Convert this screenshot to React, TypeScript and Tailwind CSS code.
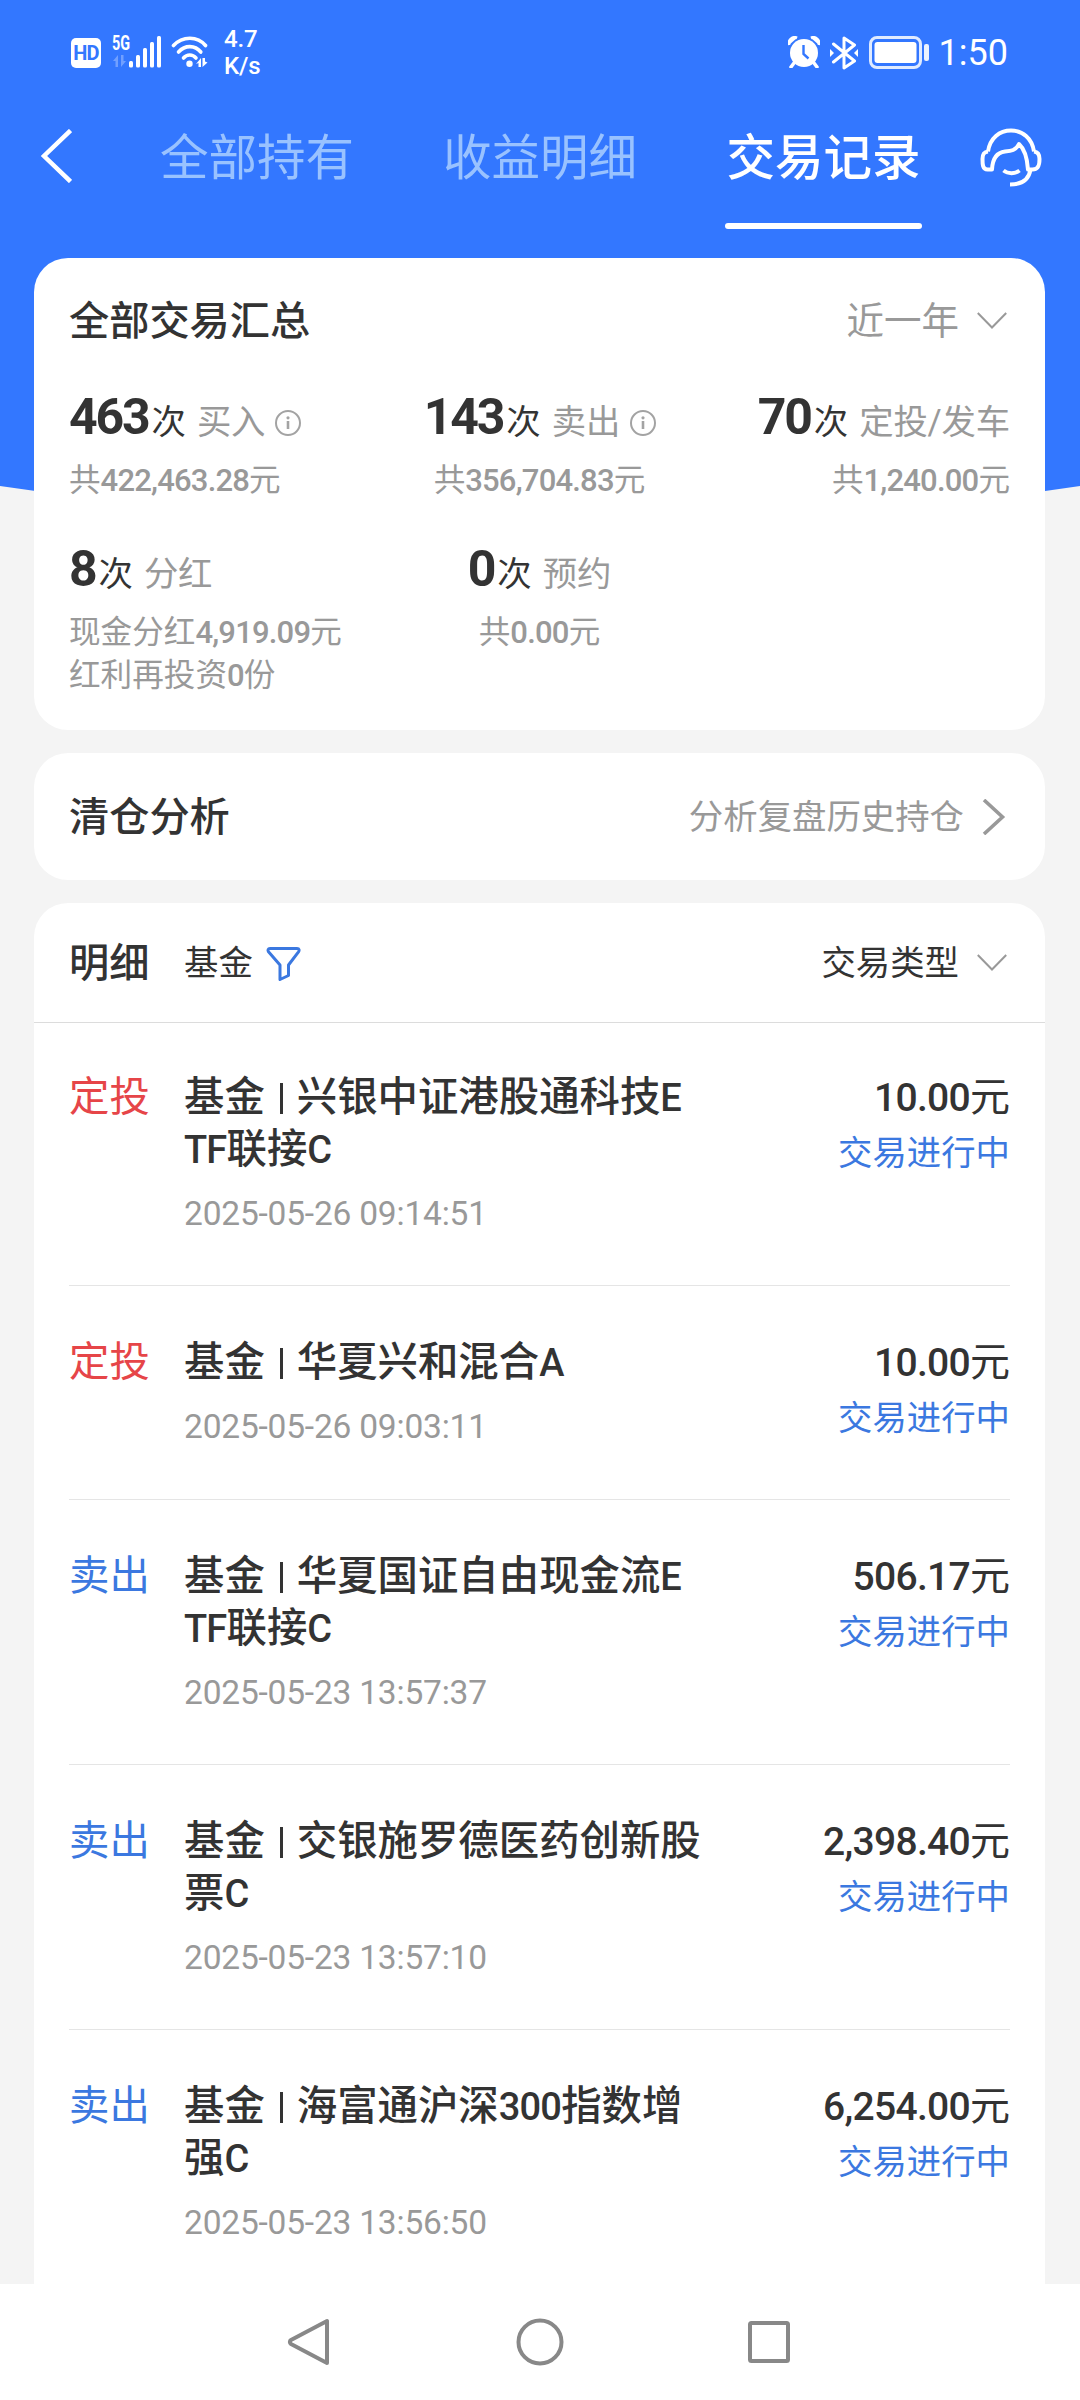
import React from 'react';

interface Summary {
  count: string;
  label: string;
  info?: boolean;
  details: string[];
  align: string;
}

interface Trade {
  type: '定投' | '卖出';
  name: string[];
  time: string;
  amount: string;
}

const summaries: Summary[] = [
  { count: '463', label: '买入', info: true, details: ['共422,463.28元'], align: 'items-start' },
  { count: '143', label: '卖出', info: true, details: ['共356,704.83元'], align: 'items-center' },
  { count: '70', label: '定投/发车', details: ['共1,240.00元'], align: 'items-end' },
  { count: '8', label: '分红', details: ['现金分红4,919.09元', '红利再投资0份'], align: 'items-start' },
  { count: '0', label: '预约', details: ['共0.00元'], align: 'items-center' },
];

const trades: Trade[] = [
  { type: '定投', name: ['兴银中证港股通科技E', 'TF联接C'], time: '2025-05-26 09:14:51', amount: '10.00' },
  { type: '定投', name: ['华夏兴和混合A'], time: '2025-05-26 09:03:11', amount: '10.00' },
  { type: '卖出', name: ['华夏国证自由现金流E', 'TF联接C'], time: '2025-05-23 13:57:37', amount: '506.17' },
  { type: '卖出', name: ['交银施罗德医药创新股', '票C'], time: '2025-05-23 13:57:10', amount: '2,398.40' },
  { type: '卖出', name: ['海富通沪深300指数增', '强C'], time: '2025-05-23 13:56:50', amount: '6,254.00' },
];

// Latin letters and digits run narrower than the Chinese glyphs beside them
const Mixed: React.FC<{ text: string; latin: string }> = ({ text, latin }) => (
  <>
    {text.split(/([A-Za-z0-9.,]+)/).map((part, i) =>
      i % 2 ? <span key={i} className={latin}>{part}</span> : part
    )}
  </>
);

const ChevronDown: React.FC = () => (
  <svg className="mr-[3px] h-[18px] w-[30px]" viewBox="0 0 30 18" fill="none" stroke="#999" strokeWidth="2">
    <path d="M.8 1L15 15.500 29.200 1" />
  </svg>
);

const InfoIcon: React.FC = () => (
  <svg className="h-[26px] w-[26px]" viewBox="0 0 26 26" fill="none" stroke="#a3a3a3" strokeWidth="2">
    <circle cx="13" cy="13" r="12" />
    <path d="M13 11v8" strokeWidth="2.6" />
    <circle cx="13" cy="7.8" r="1.6" fill="#a3a3a3" stroke="none" />
  </svg>
);

const StatusBar: React.FC = () => (
  <div className="flex h-[104px] items-start pl-[71px] pr-[72px] text-white">
    <div className="mt-[38px] flex h-[30px] w-[30px] items-center justify-center rounded-[5px] bg-white text-[20px] font-bold leading-none tracking-[-0.8px] text-[#3377ff]">
      HD
    </div>
    <div className="ml-[11px] mt-[34px] flex h-[36px] w-[19px] flex-col">
      <span className="origin-left scale-x-[0.72] text-[20px] font-bold leading-[19px]">5G</span>
      <svg className="mt-px h-[14px] w-[16px] opacity-30" viewBox="0 0 16 14" fill="#fff">
        <path d="M1 7l5-6v12H3.500V7zM9 1v12l5-6h-2.500V1z" />
      </svg>
    </div>
    <svg className="-ml-[2px] mt-[36px] h-8 w-[33px]" viewBox="0 0 33 32" fill="#fff">
      <rect x="0" y="25" width="4" height="6.500" rx="1.500" />
      <rect x="7" y="19" width="4" height="12.500" rx="1.500" />
      <rect x="14" y="12" width="4" height="19.500" rx="1.500" />
      <rect x="21" y="6" width="4" height="25.500" rx="1.500" />
      <rect x="28" y="0" width="4" height="31.500" rx="1.500" />
    </svg>
    <svg className="ml-[9px] mt-[35px] h-[34px] w-[38px]" viewBox="0 0 38 34" fill="none" stroke="#fff" strokeWidth="3.600" strokeLinecap="round">
      <path d="M2.500 10.500C11.500 .8 26.500 .8 34.500 10.500" />
      <path d="M7.500 17C14 9.800 24 9.800 29.800 17" />
      <path d="M12.500 23C16 19 21.500 19 25 23" />
      <circle cx="18.500" cy="28.800" r="3.200" fill="#fff" stroke="none" />
      <path d="M25 29l5-6v9h-2.500v-4zM31.500 23v9l5-4.500-2.500-1v-3.500z" fill="#fff" stroke="none" />
    </svg>
    <div className="ml-[15px] mt-[26px] text-[24px] font-medium leading-[27px] tracking-[-0.2px]">
      <div>4.7</div>
      <div>K/s</div>
    </div>
    <div className="ml-auto flex items-start">
      <svg className="mt-[36px] h-8 w-8" viewBox="0 0 32 32" fill="#fff">
        <path d="M6 27l-3 4M26 27l3 4" stroke="#fff" strokeWidth="3.500" strokeLinecap="round" />
        <circle cx="16" cy="17" r="14" />
        <path d="M1 9C0 4 5 0 9 2M31 9c1-5-4-9-8-7" stroke="#fff" strokeWidth="3" />
        <path d="M15.500 9v9l5 4.500" fill="none" stroke="#3377ff" strokeWidth="2.400" />
      </svg>
      <svg className="ml-[10px] mt-[36px] h-[34px] w-[28px]" viewBox="0 0 28 34" fill="none" stroke="#fff" strokeWidth="3">
        <path d="M3.500 8l21 17L14 32V2l10.500 7-21 17" strokeLinejoin="round" strokeLinecap="round" />
        <path d="M0 13l4 4-4 4zM28 13l-4 4 4 4z" fill="#fff" stroke="none" />
      </svg>
      <svg className="ml-[11px] mt-[36px] h-[33px] w-[60px]" viewBox="0 0 60 33" fill="none">
        <rect x="1.500" y="1.500" width="50" height="30" rx="6.500" stroke="#fff" strokeOpacity=".85" strokeWidth="3" />
        <rect x="5.500" y="6" width="42" height="21" rx="3" fill="#fff" />
        <rect x="55" y="8" width="5" height="17" rx="2" fill="#fff" fillOpacity=".9" />
      </svg>
      <div className="ml-[10px] mt-[33px] text-[36px] leading-[40px]">1:50</div>
    </div>
  </div>
);

const TabBar: React.FC = () => (
  <div className="flex h-[126px] items-start pl-[40px] pr-[38px] text-[48.500px] leading-[56px] text-white">
    <svg className="mt-[25px] h-[54px] w-8" viewBox="0 0 32 54" fill="none" stroke="#fff" strokeWidth="4.500">
      <path d="M30.500 1.500L4 27l26.500 25.500" />
    </svg>
    <div className="ml-[88px] mt-[27px] text-[#99c2ff]">全部持有</div>
    <div className="ml-[89px] mt-[27px] text-[#99c2ff]">收益明细</div>
    <div className="ml-[88px] mt-[27px] flex w-[197px] flex-col items-center font-medium">
      交易记录
      <div className="mt-[36px] h-[6px] w-full rounded-full bg-white" />
    </div>
    <svg className="ml-auto mt-[23px] h-[60px] w-[62px]" viewBox="0 0 62 60" fill="none" stroke="#fff" strokeWidth="4" strokeLinejoin="round">
      <path d="M8 24.500C10 11 19.500 3.500 31 3.500S52 11 54 24.500" />
      <path d="M8 24.500C4 25 2.500 27 2.500 32s0 10.500 5 10.500h4.500C12.500 32 17 25.500 25 24.500c6-.5 11-1 14-7.500 5 4.500 8 11 9 25.500h4.500c7 0 7-6.500 7-10.500S58 25 54 24.500" />
      <path d="M23.500 43.500c4.500 3.500 11.500 3.500 16 0" />
      <path d="M50.500 42.500C49 52 42 57.500 30 57.500" />
    </svg>
  </div>
);

const SummaryCell: React.FC<{ item: Summary }> = ({ item }) => (
  <div className={`flex flex-col ${item.align}`}>
    <div className="flex h-[58px] items-start whitespace-nowrap text-[34.400px] leading-[50px]">
      <span className="mt-px text-[50px] font-bold leading-[50px] tracking-[-2.200px] text-[#333]">{item.count}</span>
      <span className="ml-[3px] mt-[6px] text-[#333]">次</span>
      <span className="ml-[11px] mt-[6px] tracking-[-0.200px] text-[#999]">{item.label}</span>
      {item.info && <span className="-mr-px ml-[10px] mt-[19px]"><InfoIcon /></span>}
    </div>
    <div className="mt-[10px] text-[31.600px] leading-[43px] text-[#999]">
      {item.details.map((line) => (
        <div key={line}>
          <Mixed text={line} latin="text-[31px] font-medium tracking-[-0.800px]" />
        </div>
      ))}
    </div>
  </div>
);

const TradeRow: React.FC<{ trade: Trade }> = ({ trade }) => (
  <div className="mx-[35px] flex items-start border-b border-[#e5e5e5] pb-[49.300px] pt-[51px] last:border-b-0">
    <div className={`w-[115px] text-[40.400px] leading-[52px] ${trade.type === '定投' ? 'text-[#e64548]' : 'text-[#3b78e0]'}`}>
      {trade.type}
    </div>
    <div className="flex-1">
      <div className="whitespace-nowrap text-[40.400px] font-medium leading-[52px] text-[#333]">
        {trade.name.map((line, i) => (
          <div key={line}>
            {i === 0 && <>基金<span className="mx-[14.500px] inline-block h-[31px] w-[3px] translate-x-px translate-y-[3px] bg-[#333]" /></>}
            <Mixed text={line} latin="text-[38px] tracking-[-0.800px]" />
          </div>
        ))}
      </div>
      <div className="mt-[16px] text-[33.500px] leading-[44px] tracking-[-0.200px] text-[#999]">{trade.time}</div>
    </div>
    <div className="text-right">
      <div className="text-[40px] font-medium leading-[52px] text-[#333]">
        <span className="text-[39px] tracking-[-0.700px]">{trade.amount}</span>
        <span className="font-normal">元</span>
      </div>
      <div className="mt-[5px] text-[34.400px] leading-[48px] text-[#3b78e0]">交易进行中</div>
    </div>
  </div>
);

const App: React.FC = () => {
  return (
    <div className="flex h-[2400px] w-[1080px] flex-col overflow-hidden bg-[#f4f4f4] font-['Roboto','Noto_Sans_CJK_SC',sans-serif]">
      <header className="h-[486px] shrink-0 bg-[#3377ff]">
        <StatusBar />
        <TabBar />
      </header>
      <svg className="block h-10 w-full shrink-0" viewBox="0 0 1080 40" fill="#3377ff">
        <path d="M0 0Q540 80 1080 0z" />
      </svg>

      <main className="-mt-[268px] flex h-[2026px] shrink-0 flex-col gap-[23px] overflow-hidden pl-[34px] pr-[35px]">
        {/* Yearly totals */}
        <section className="h-[472px] shrink-0 rounded-[34px] bg-white px-[35px] pt-[37px]">
          <div className="flex h-[52px] items-center justify-between">
            <h2 className="pt-[2px] text-[40.200px] font-medium leading-[52px] text-[#333]">全部交易汇总</h2>
            <div className="flex items-center gap-[18px] text-[37.500px] leading-[52px] text-[#999]">
              近一年
              <ChevronDown />
            </div>
          </div>
          <div className="mt-[44px] grid grid-cols-3 gap-y-[41px]">
            {summaries.map((item) => (
              <SummaryCell key={item.label} item={item} />
            ))}
          </div>
        </section>

        {/* Closed position analysis */}
        <section className="flex h-[127px] shrink-0 items-center justify-between rounded-[34px] bg-white px-[35px] pt-[2px]">
          <h2 className="pt-[2px] text-[40.200px] font-medium text-[#333]">清仓分析</h2>
          <div className="flex items-center gap-[18px] text-[34.400px] text-[#999]">
            分析复盘历史持仓
            <svg className="mr-[4px] h-[36px] w-[24px]" viewBox="0 0 24 36" fill="none" stroke="#999" strokeWidth="3.600">
              <path d="M2 1l18.500 17L2 35" />
            </svg>
          </div>
        </section>

        {/* Trade list */}
        <section className="shrink-0 rounded-t-[34px] bg-white">
          <div className="flex h-[120px] items-center border-b border-[#dcdcdc] px-[35px] pt-[2px] text-[34.400px] text-[#333]">
            <h2 className="w-[115px] pt-[2px] text-[40.200px] font-medium">明细</h2>
            <span>基金</span>
            <svg className="ml-[13px] h-[36px] w-[36px]" viewBox="0 0 36 36" fill="none" stroke="#3b78e0" strokeWidth="3" strokeLinejoin="round">
              <path d="M4 2.500h27c2.500 0 2.500 1.800 1.500 3.300L22.500 19v10.500L14 33.500V19L2.500 5.800C1.500 4 2 2.500 4 2.500z" />
            </svg>
            <div className="ml-auto flex items-center gap-[18px]">
              交易类型
              <ChevronDown />
            </div>
          </div>
          <div className="-mt-[2px]">
            {trades.map((trade) => (
              <TradeRow key={trade.time} trade={trade} />
            ))}
          </div>
        </section>
      </main>

      <nav className="flex h-[116px] shrink-0 items-start bg-white pl-[286px] pt-[33px]">
        <svg className="h-[50px] w-[46px]" viewBox="0 0 46 50" fill="none" stroke="#888" strokeWidth="4" strokeLinejoin="round">
          <path d="M41 4v42L5 27c-1.500-1-1.500-3 0-4z" />
        </svg>
        <svg className="ml-[183px] h-[50px] w-[50px]" viewBox="0 0 50 50" fill="none" stroke="#888" strokeWidth="4">
          <circle cx="25" cy="25" r="21.500" />
        </svg>
        <svg className="ml-[179px] h-[50px] w-[50px]" viewBox="0 0 50 50" fill="none" stroke="#888" strokeWidth="4">
          <rect x="6" y="6" width="38" height="38" rx="1.500" />
        </svg>
      </nav>
    </div>
  );
};

export default App;
